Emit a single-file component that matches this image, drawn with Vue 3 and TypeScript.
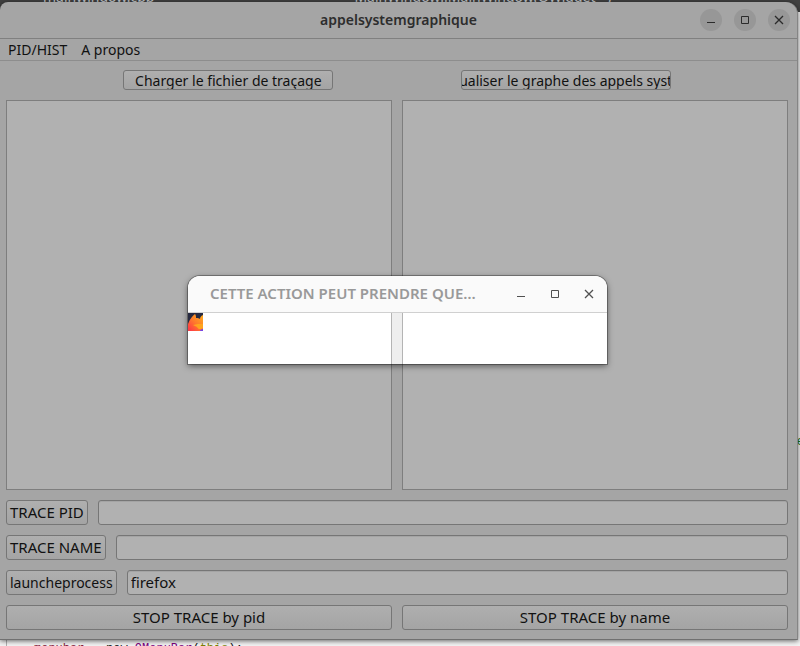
<script setup lang="ts">
import { ref } from 'vue'

interface TraceRow {
  id: string
  action: string
}

const menus: string[] = ['PID/HIST', 'A propos']
const rows: TraceRow[] = [
  { id: 'pid', action: 'TRACE PID' },
  { id: 'name', action: 'TRACE NAME' },
  { id: 'process', action: 'launcheprocess' },
]
const values = ref<Record<string, string>>({ pid: '', name: '', process: 'firefox' })
const traceText = ref('')
const graphText = ref('')

function isCaps(text: string): boolean {
  return text !== text.toLowerCase()
}
</script>

<template>
  <div class="desktop">
    <div class="editor-top" aria-hidden="true">
      <span class="file-tab">mainwindow.cpp</span>
      <span class="symbol-path">MainWindow::MainWindow(QWidget *)</span>
    </div>
    <span class="editor-edge" aria-hidden="true">e</span>

    <main class="window">
      <header class="titlebar">
        <h1>appelsystemgraphique</h1>
        <div class="controls round">
          <button type="button" aria-label="Minimize">
            <svg viewBox="0 0 22 22"><path d="M7 13.5h8" /></svg>
          </button>
          <button type="button" aria-label="Maximize">
            <svg viewBox="0 0 22 22"><path d="M7.5 7.5h7v7h-7z" /></svg>
          </button>
          <button type="button" aria-label="Close">
            <svg viewBox="0 0 22 22"><path class="cross" d="M7 7l8 8m0-8l-8 8" /></svg>
          </button>
        </div>
      </header>

      <nav class="menubar">
        <button v-for="m in menus" :key="m" type="button">{{ m }}</button>
      </nav>

      <div class="content">
        <div class="load-row">
          <button type="button" class="push small">Charger le fichier de traçage</button>
          <button type="button" class="push small">ualiser le graphe des appels syst</button>
        </div>

        <div class="pair panes">
          <textarea v-model="traceText" aria-label="trace"></textarea>
          <textarea v-model="graphText" aria-label="graphe"></textarea>
        </div>

        <div v-for="r in rows" :key="r.id" class="trace-row">
          <button :id="`action-${r.id}`" type="button" class="push" :class="{ caps: isCaps(r.action) }">
            {{ r.action }}
          </button>
          <input v-model="values[r.id]" type="text" :aria-labelledby="`action-${r.id}`" />
        </div>

        <div class="pair">
          <button type="button" class="push caps">STOP TRACE by pid</button>
          <button type="button" class="push caps">STOP TRACE by name</button>
        </div>
      </div>
    </main>

    <section class="dialog" role="dialog" aria-labelledby="dialog-title">
      <header class="dialog-title">
        <h2 id="dialog-title">CETTE ACTION PEUT PRENDRE QUE…</h2>
        <div class="controls">
          <button type="button" aria-label="Minimize">
            <svg viewBox="0 0 22 22"><path d="M7 13.5h8" /></svg>
          </button>
          <button type="button" aria-label="Maximize">
            <svg viewBox="0 0 22 22"><path d="M7.5 7.5h7v7h-7z" /></svg>
          </button>
          <button type="button" aria-label="Close">
            <svg viewBox="0 0 22 22"><path class="cross" d="M7 7l8 8m0-8l-8 8" /></svg>
          </button>
        </div>
      </header>
      <div class="dialog-body">
        <svg class="fox" viewBox="0 0 15 18" aria-hidden="true">
          <defs>
            <linearGradient id="fur" x1="1" y1="0" x2="0.1" y2="1">
              <stop offset="0" stop-color="#ffb01c" />
              <stop offset="0.5" stop-color="#ff7f2a" />
              <stop offset="1" stop-color="#ff3647" />
            </linearGradient>
          </defs>
          <path d="M0 0h15v18H0z" fill="#272a40" />
          <path d="M0 18V11C1 9 2 5 7 1c1 1 1 3 1 4 2 0 3 0 4 1 0-2 1-3 3-4v16z" fill="url(#fur)" />
          <path d="M5 12c2 0 3-1 5-1h5v4c-3 2-5 1-6-1-1-1-3-1-4-2z" fill="#ffa51e" />
          <path d="M12 18c0-1 1-2 3-2v2z" fill="#7543e5" />
        </svg>
        <div class="gutter"></div>
      </div>
    </section>

    <div class="editor-bottom" aria-hidden="true">
      <code><span class="member">menubar</span> = new <span class="type">QMenuBar</span>(<span class="keyword">this</span>);</code>
    </div>
  </div>
</template>

<style>
body {
  margin: 0;
}
</style>

<style scoped>
.desktop {
  position: relative;
  display: flex;
  flex-direction: column;
  height: 100vh;
  overflow: hidden;
  background: linear-gradient(#414141 12px, #f3f3f3 12px);
  font: 14px/20px 'Noto Sans', 'Open Sans', sans-serif;
  color: #111;
}
button,
input,
textarea {
  box-sizing: border-box;
  margin: 0;
  font: inherit;
  color: inherit;
}
.editor-top {
  display: flex;
  align-items: flex-end;
  gap: 200px;
  height: 2px;
  padding-left: 43px;
  overflow: hidden;
  line-height: 10px;
  color: #c4c8cc;
}
.editor-edge {
  position: absolute;
  right: -4px;
  top: 432px;
  font-family: 'Liberation Mono', monospace;
  font-size: 12px;
  color: #1c7a1c;
}
.window {
  position: relative;
  flex: 1;
  display: flex;
  flex-direction: column;
  min-height: 0;
  margin-right: 2px;
  border-right: 1px solid #858585;
  border-bottom: 1px solid #707070;
  border-radius: 8px 12px 0 0;
  background: #a5a5a5;
  box-shadow: 0 1px 5px rgba(0, 0, 0, 0.6);
}
.titlebar {
  position: relative;
  display: flex;
  align-items: center;
  justify-content: center;
  height: 36px;
  border-bottom: 1px solid #808080;
}
h1,
h2 {
  margin: 0;
  font-size: 14px;
  line-height: 20px;
  font-weight: 600;
}
h1 {
  color: #2d2d2d;
}
.controls {
  display: flex;
  gap: 12px;
}
.titlebar .controls {
  position: absolute;
  right: 7px;
}
.controls button {
  width: 22px;
  height: 22px;
  padding: 0;
  border: 0;
  border-radius: 50%;
  background: transparent;
}
.controls.round button {
  background: #979797;
}
.controls svg {
  display: block;
  width: 22px;
  height: 22px;
  fill: none;
  stroke: #2b2b2b;
}
.controls .cross {
  stroke-width: 1.3;
}
.menubar {
  display: flex;
  gap: 14px;
  height: 21px;
  padding-left: 8px;
  border-bottom: 1px solid #8d8d8d;
}
.menubar button {
  padding: 0;
  border: 0;
  background: transparent;
}
.content {
  flex: 1;
  display: flex;
  flex-direction: column;
  gap: 10px;
  min-height: 0;
  padding: 9px 9px 9px 6px;
}
.load-row {
  display: flex;
  justify-content: space-evenly;
  gap: 10px;
}
.push {
  height: 25px;
  padding: 0 3px;
  border: 1px solid #767676;
  border-radius: 3px;
  background: linear-gradient(#afafaf, #a4a4a4);
  white-space: nowrap;
}
.push.small {
  display: flex;
  justify-content: center;
  align-items: center;
  width: 210px;
  height: 20px;
  padding: 1px 0 0;
  overflow: hidden;
  line-height: 18px;
}
.push.caps {
  padding-bottom: 2px;
  font-size: 15px;
}
.pair {
  display: grid;
  grid-template-columns: 1fr 1fr;
  gap: 10px;
}
.panes {
  flex: 1;
  min-height: 0;
}
textarea {
  width: 100%;
  height: 100%;
  border: 1px solid #7e7e7e;
  background: #b1b1b1;
  resize: none;
  outline: 0;
}
.trace-row {
  display: flex;
  gap: 10px;
}
input {
  flex: 1;
  min-width: 0;
  height: 25px;
  padding: 0 3px 2px;
  border: 1px solid #767676;
  border-radius: 3px;
  background: #b1b1b1;
  box-shadow: inset 0 1px #a4a4a4;
  font-size: 15px;
  outline: 0;
}
.dialog {
  position: absolute;
  left: 188px;
  top: 276px;
  width: 419px;
  border-radius: 12px 12px 0 0;
  background: #fff;
  box-shadow: 0 0 0 1px rgba(0, 0, 0, 0.3), 0 2px 6px rgba(0, 0, 0, 0.5);
}
.dialog-title {
  display: flex;
  align-items: center;
  justify-content: space-between;
  height: 36px;
  padding: 0 7px 0 22px;
  border-bottom: 1px solid #d0d0d0;
  border-radius: 12px 12px 0 0;
  background: #fafafa;
}
h2 {
  font-size: 15px;
  line-height: 22px;
  padding-bottom: 2px;
  white-space: nowrap;
  color: #999;
}
.dialog .controls svg {
  stroke: #505050;
}
.dialog-body {
  display: flex;
  height: 51px;
}
.fox {
  width: 15px;
  height: 18px;
}
.gutter {
  width: 10px;
  margin-left: 188px;
  border: solid #b4b4b4;
  border-width: 0 1px;
  background: #eee;
}
.editor-bottom {
  height: 6px;
  margin-left: 6px;
  padding-left: 27px;
  border-left: 1px solid #b0b0b0;
  overflow: hidden;
}
code {
  display: block;
  font: 12px/18px 'Liberation Mono', monospace;
  white-space: nowrap;
}
.member {
  color: #8a1c3c;
}
.type {
  color: #800080;
}
.keyword {
  color: #808000;
}
</style>
